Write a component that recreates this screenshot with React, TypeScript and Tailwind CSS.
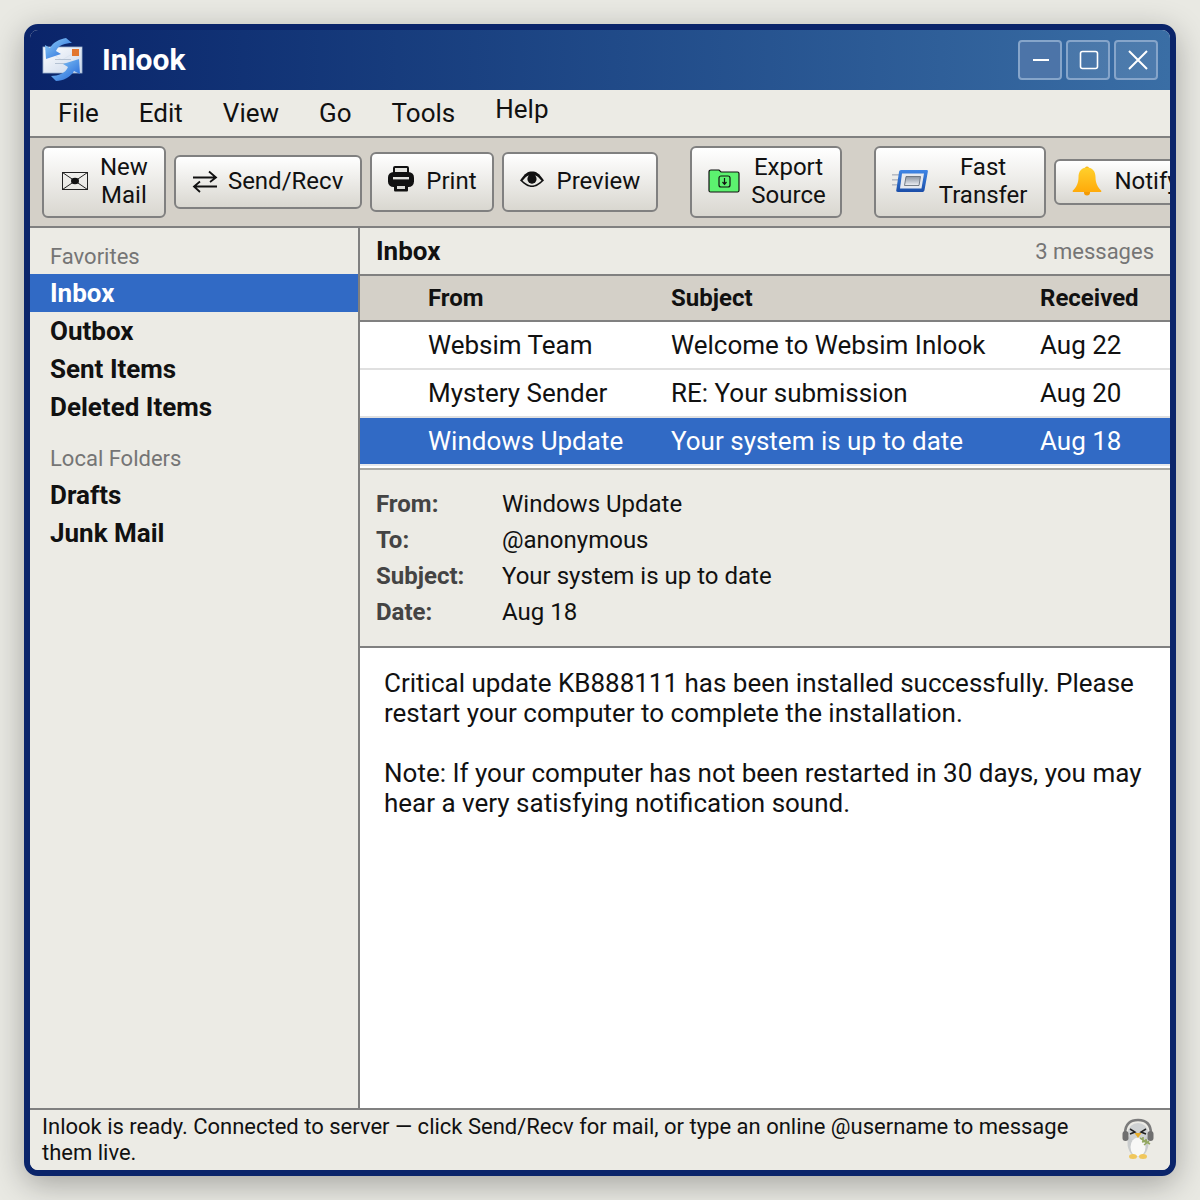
import React from "react";

const LogoIcon = () => (
  <svg width="42" height="44" viewBox="0 0 42 44" className="shrink-0">
    <defs>
      <linearGradient id="env" x1="0" y1="0" x2="1" y2="1">
        <stop offset="0" stopColor="#ffffff" />
        <stop offset="1" stopColor="#c9d6ea" />
      </linearGradient>
      <linearGradient id="arr" x1="0" y1="0" x2="1" y2="1">
        <stop offset="0" stopColor="#8fd0f8" />
        <stop offset="1" stopColor="#1f63d8" />
      </linearGradient>
    </defs>
    <rect x="1" y="9" width="39" height="26" fill="url(#env)" stroke="#9fb4d0" strokeWidth="0.8" />
    <path d="M1 10 L20 22 L40 10" fill="none" stroke="#dbe4f0" strokeWidth="1" />
    <rect x="30" y="11" width="7" height="7" fill="#e2762e" />
    <rect x="13" y="21" width="16" height="1" fill="#b5c2d3" />
    <rect x="13" y="25" width="14" height="1" fill="#b5c2d3" />
    <path d="M24 0 L30 5 C24 5 16 7 14 13 L19 16 L4 21 L3 7 L8 10 C11 4 18 1 24 0 Z" fill="url(#arr)" />
    <path d="M14 43 L9 38 C16 38 24 35 26 29 L21 26 L37 21 L38 36 L32 33 C29 39 21 43 14 43 Z" fill="url(#arr)" />
  </svg>
);

const MailIcon = () => (
  <svg width="26" height="20" viewBox="0 0 26 20" className="shrink-0">
    <rect x="0.5" y="1.5" width="25" height="17" fill="none" stroke="#222" strokeWidth="1" />
    <path d="M0.5 1.5 L25.5 18.5 M25.5 1.5 L0.5 18.5" stroke="#222" strokeWidth="1" />
    <ellipse cx="13" cy="10" rx="4" ry="3.2" fill="#111" />
  </svg>
);

const SwapIcon = () => (
  <svg width="26" height="26" viewBox="0 0 26 26" className="shrink-0" fill="none" stroke="#111" strokeWidth="1.8">
    <path d="M1 9.5 H24 M17 3.5 L24 9.5 L18 14" />
    <path d="M25 18.5 H2 M8 13.5 L2 18.5 L8 24" />
  </svg>
);

const PrintIcon = () => (
  <svg width="26" height="26" viewBox="0 0 26 26" className="shrink-0 -translate-y-[2px]">
    <rect x="6" y="1" width="14" height="8" rx="1" fill="#e4e4e0" stroke="#111" strokeWidth="2" />
    <rect x="0" y="6" width="26" height="15" rx="5.5" fill="#111" />
    <rect x="5" y="11" width="16" height="2.4" fill="#e4e4e0" />
    <path d="M6 15 H20 V24 C20 25 19.5 25.5 18.5 25.5 H7.5 C6.5 25.5 6 25 6 24 Z" fill="#111" />
    <rect x="9" y="20" width="8" height="3" fill="#d8d8d4" />
  </svg>
);

const EyeIcon = () => (
  <svg width="24" height="18" viewBox="0 0 24 18" className="shrink-0 -translate-y-[1px]">
    <path d="M0 9.5 C5 2 8 0.5 12 0.5 C16 0.5 19 2 24 9.5 C19 14 16 16 12 16 C8 16 5 14 0 9.5 Z" fill="#111" />
    <path d="M2.5 9.8 C5 6.5 7 5 9 4.5 C7.5 8 8.5 12 12 12.5 C15.5 12 16.5 8 15 4.5 C17 5 19 6.5 21.5 9.8 C18 13 15 14.5 12 14.5 C9 14.5 6 13 2.5 9.8 Z" fill="#e8e8e3" />
    <circle cx="12" cy="8" r="4.6" fill="#111" />
  </svg>
);

const FolderIcon = () => (
  <svg width="32" height="24" viewBox="0 0 32 24" className="shrink-0">
    <path d="M1 3 C1 1.5 1.7 1 3 1 H11 L13 3 H29.5 C30.5 3 31 3.7 31 4.5 V21.5 C31 22.5 30.5 23 29.5 23 H2.5 C1.5 23 1 22.5 1 21.5 Z" fill="#5cf26f" stroke="#111" strokeWidth="1.2" />
    <rect x="11" y="7" width="11" height="11" rx="2" fill="none" stroke="#111" strokeWidth="1.2" />
    <path d="M16.5 9 V15 M14.5 13 L16.5 15.4 L18.5 13" fill="none" stroke="#111" strokeWidth="1.2" />
  </svg>
);

const TransferIcon = () => (
  <svg width="36" height="24" viewBox="0 0 36 24" className="shrink-0">
    <defs>
      <linearGradient id="tf" x1="0" y1="0" x2="0" y2="1">
        <stop offset="0" stopColor="#3f86e6" />
        <stop offset="1" stopColor="#1b4ea8" />
      </linearGradient>
      <linearGradient id="tfi" x1="0" y1="0" x2="0" y2="1">
        <stop offset="0" stopColor="#8a93a0" />
        <stop offset="1" stopColor="#eef0f4" />
      </linearGradient>
    </defs>
    <rect x="0" y="5" width="7" height="1.6" fill="#b8bcc4" />
    <rect x="0" y="10" width="6" height="1.6" fill="#b8bcc4" />
    <rect x="0" y="15" width="5" height="1.6" fill="#b8bcc4" />
    <path d="M9 1 H35 C36 1 36 2 35.8 3 L32.5 21 C32.2 22.5 31.5 23 30 23 H6 C4.5 23 4 22.3 4.3 21 L7 3 C7.2 1.8 8 1 9 1 Z" fill="url(#tf)" />
    <path d="M10 4.5 H32 L29.5 19.5 H8 Z" fill="#e6e9ef" />
    <path d="M14 7.5 H28.5 L27 16.5 H12.5 Z" fill="url(#tfi)" stroke="#5b6470" strokeWidth="0.8" />
  </svg>
);

const BellIcon = () => (
  <svg width="30" height="30" viewBox="0 0 30 30" className="shrink-0">
    <defs>
      <linearGradient id="bl" x1="0" y1="0" x2="0" y2="1">
        <stop offset="0" stopColor="#ffd02c" />
        <stop offset="1" stopColor="#ffaa0a" />
      </linearGradient>
    </defs>
    <circle cx="15" cy="2.5" r="2" fill="#f5a90a" />
    <circle cx="15" cy="26.5" r="3" fill="#f39b05" />
    <path d="M15 1.5 C21 1.5 23.5 6 23.5 11 C23.5 17 25.5 21 29.5 25 L29 26 H1 L0.5 25 C4.5 21 6.5 17 6.5 11 C6.5 6 9 1.5 15 1.5 Z" fill="url(#bl)" />
  </svg>
);

const PenguinIcon = () => (
  <svg width="32" height="42" viewBox="0 0 32 42" className="shrink-0 blur-[0.4px]">
    <ellipse cx="16" cy="25" rx="10.5" ry="14" fill="#c9cccd" />
    <ellipse cx="16" cy="14" rx="10" ry="9" fill="#cfd2d3" />
    <ellipse cx="16" cy="29" rx="7.5" ry="9.5" fill="#f8f8f6" />
    <path d="M3 16 C3 5 9 2 16 2 C23 2 29 5 29 16" fill="none" stroke="#7b7b7b" strokeWidth="2.6" />
    <rect x="0.5" y="13" width="6" height="10" rx="3" fill="#6f6f6f" />
    <rect x="25.5" y="13" width="6" height="10" rx="3" fill="#6f6f6f" />
    <path d="M8 11 L13 14 L8 16 M24 11 L19 14 L24 16" fill="none" stroke="#222" strokeWidth="1.5" />
    <path d="M12.5 15 H19.5 L16 20 Z" fill="#e7ad2a" />
    <path d="M18 20 L28 26 M21 19 L21 24 M24 21 L24 26 M20 24 L25 23 M22 27 L27 23" fill="none" stroke="#93a860" strokeWidth="1.6" />
    <ellipse cx="11" cy="38.5" rx="4" ry="2.5" fill="#f0c75c" />
    <ellipse cx="21" cy="38.5" rx="4" ry="2.5" fill="#f0c75c" />
  </svg>
);

const btn =
  "flex items-center shrink-0 border-2 border-[#808080] rounded-[6px] bg-gradient-to-b from-[#ffffff] to-[#d9d7d0] pb-[2px] text-[#111] text-[24px] leading-[28px] text-center";

const WinBtn = ({ children, hot }: { children: React.ReactNode; hot?: boolean }) => (
  <div
    className={`w-11 h-10 flex items-center justify-center rounded-[4px] border-2 border-[#86a5ca] ${
      hot ? "bg-[#4c74a8]" : "bg-[#ffffff1a]"
    }`}
  >
    {children}
  </div>
);

const menus = ["File", "Edit", "View", "Go", "Tools"];

const rows = [
  { f: "Websim Team", s: "Welcome to Websim Inlook", d: "Aug 22" },
  { f: "Mystery Sender", s: "RE: Your submission", d: "Aug 20" },
];

const cols = "grid grid-cols-[56px_243px_369px_1fr] items-center";

export default function App() {
  return (
    <div
      className="w-[1200px] h-[1200px] bg-[#e9e9e3] p-6 text-[#111]"
      style={{ fontFamily: "Roboto, 'Noto Sans', sans-serif" }}
    >
      <div className="w-[1152px] h-[1152px] flex flex-col border-[6px] border-[#0a246a] rounded-[14px] overflow-hidden shadow-[0_8px_32px_rgba(0,0,0,0.3)] bg-[#ecebe5]">
        {/* Title bar */}
        <div className="h-[60px] shrink-0 flex items-center pl-3 pr-3 bg-gradient-to-r from-[#0a246a] to-[#3a6ea5]">
          <LogoIcon />
          <span className="ml-[18px] text-white font-bold text-[30px] leading-none">Inlook</span>
          <div className="ml-auto flex gap-1">
            <WinBtn hot>
              <svg width="18" height="18" viewBox="0 0 18 18" className="translate-x-[1px]"><path d="M1 9 H17" stroke="#fff" strokeWidth="2" /></svg>
            </WinBtn>
            <WinBtn>
              <svg width="20" height="20" viewBox="0 0 20 20" className="translate-x-[1px]"><rect x="1.5" y="1.5" width="17" height="17" rx="2" fill="none" stroke="#fff" strokeWidth="1.6" /></svg>
            </WinBtn>
            <WinBtn>
              <svg width="20" height="20" viewBox="0 0 20 20" className="translate-x-[2px]"><path d="M1 1 L19 19 M19 1 L1 19" stroke="#fff" strokeWidth="2" /></svg>
            </WinBtn>
          </div>
        </div>

        {/* Menu */}
        <div className="h-12 shrink-0 flex items-start border-b-2 border-[#808080] pl-7 text-[26px] leading-[30px] gap-10 bg-[#ecebe5]">
          {menus.map((m) => (
            <span key={m} className="pt-2">{m}</span>
          ))}
          <span className="pt-1">Help</span>
        </div>

        {/* Toolbar */}
        <div className="h-[90px] shrink-0 flex items-center pl-3 gap-2 bg-[#d4d0c8] border-b-2 border-[#808080] overflow-hidden">
          <div className={`${btn} h-[72px] gap-3 pl-[18px] pr-4`}>
            <MailIcon />
            <span>New<br />Mail</span>
          </div>
          <div className={`${btn} h-[54px] gap-[10px] pl-4 pr-[17px]`}>
            <SwapIcon />
            <span>Send/Recv</span>
          </div>
          <div className={`${btn} h-[60px] gap-3 px-4`}>
            <PrintIcon />
            <span>Print</span>
          </div>
          <div className={`${btn} h-[60px] gap-3 px-4`}>
            <EyeIcon />
            <span>Preview</span>
          </div>
          <div className={`${btn} h-[72px] gap-[11px] ml-6 pl-4 pr-[14px]`}>
            <FolderIcon />
            <span>Export<br />Source</span>
          </div>
          <div className={`${btn} h-[72px] gap-[11px] ml-6 pl-4 pr-[17px]`}>
            <TransferIcon />
            <span>Fast<br />Transfer</span>
          </div>
          <div className={`${btn} h-[46px] gap-3 px-4`}>
            <BellIcon />
            <span>Notify</span>
          </div>
        </div>

        {/* Body */}
        <div className="flex-1 flex min-h-0">
          <div className="w-[330px] shrink-0 border-r-2 border-[#808080] pt-[14px] text-[26px] font-bold leading-[38px]">
            <div className="px-5 text-[22px] font-normal text-[#757575] leading-[30px] pb-[2px]">Favorites</div>
            <div className="px-5 bg-[#316ac5] text-white">Inbox</div>
            <div className="px-5">Outbox</div>
            <div className="px-5">Sent Items</div>
            <div className="px-5">Deleted Items</div>
            <div className="px-5 mt-[18px] text-[22px] font-normal text-[#757575] leading-[30px] pb-[2px]">Local Folders</div>
            <div className="px-5">Drafts</div>
            <div className="px-5">Junk Mail</div>
          </div>

          <div className="flex-1 flex flex-col min-w-0">
            <div className="h-12 shrink-0 flex items-center justify-between pl-4 pr-4 border-b-2 border-[#808080]">
              <span className="text-[26px] font-bold">Inbox</span>
              <span className="text-[22px] text-[#757575]">3 messages</span>
            </div>
            <div className={`${cols} h-[46px] shrink-0 bg-[#d4d0c8] border-b-2 border-[#808080] text-[24px] font-bold`}>
              <span />
              <span className="px-3">From</span>
              <span className="px-3">Subject</span>
              <span className="px-3">Received</span>
            </div>
            <div className="bg-white shrink-0 pb-[2px]">
              {rows.map((r) => (
                <div key={r.f} className={`${cols} h-12 border-b-2 border-[#e0e0e0] text-[26px]`}>
                  <span />
                  <span className="px-3">{r.f}</span>
                  <span className="px-3">{r.s}</span>
                  <span className="px-3">{r.d}</span>
                </div>
              ))}
              <div className={`${cols} h-[48px] bg-[#316ac5] border-b-2 border-[#e6e8ec] text-[26px] text-white`}>
                <span />
                <span className="px-3">Windows Update</span>
                <span className="px-3">Your system is up to date</span>
                <span className="px-3">Aug 18</span>
              </div>
            </div>
            <div className="h-[180px] shrink-0 border-t-2 border-t-[#a9a9a5] border-b-2 border-b-[#808080] pt-4 px-4 text-[24px] leading-[36px]">
              {[
                ["From:", "Windows Update"],
                ["To:", "@anonymous"],
                ["Subject:", "Your system is up to date"],
                ["Date:", "Aug 18"],
              ].map(([k, v]) => (
                <div key={k} className="flex">
                  <span className="w-[126px] shrink-0 font-bold text-[#444]">{k}</span>
                  <span>{v}</span>
                </div>
              ))}
            </div>
            <div className="flex-1 bg-white px-6 pt-5 text-[26px] leading-[30px]">
              <p>Critical update KB888111 has been installed successfully. Please restart your computer to complete the installation.</p>
              <p className="mt-[30px]">Note: If your computer has not been restarted in 30 days, you may hear a very satisfying notification sound.</p>
            </div>
          </div>
        </div>

        {/* Status */}
        <div className="h-[62px] shrink-0 flex border-t-2 border-[#808080] pl-3 pr-4 pt-1 bg-[#ecebe5]">
          <div className="flex-1 text-[22px] leading-[26px] pr-[40px]">
            Inlook is ready. Connected to server — click Send/Recv for mail, or type an online @username to message them live.
          </div>
          <div className="pt-[4px] shrink-0">
            <PenguinIcon />
          </div>
        </div>
      </div>
    </div>
  );
}
